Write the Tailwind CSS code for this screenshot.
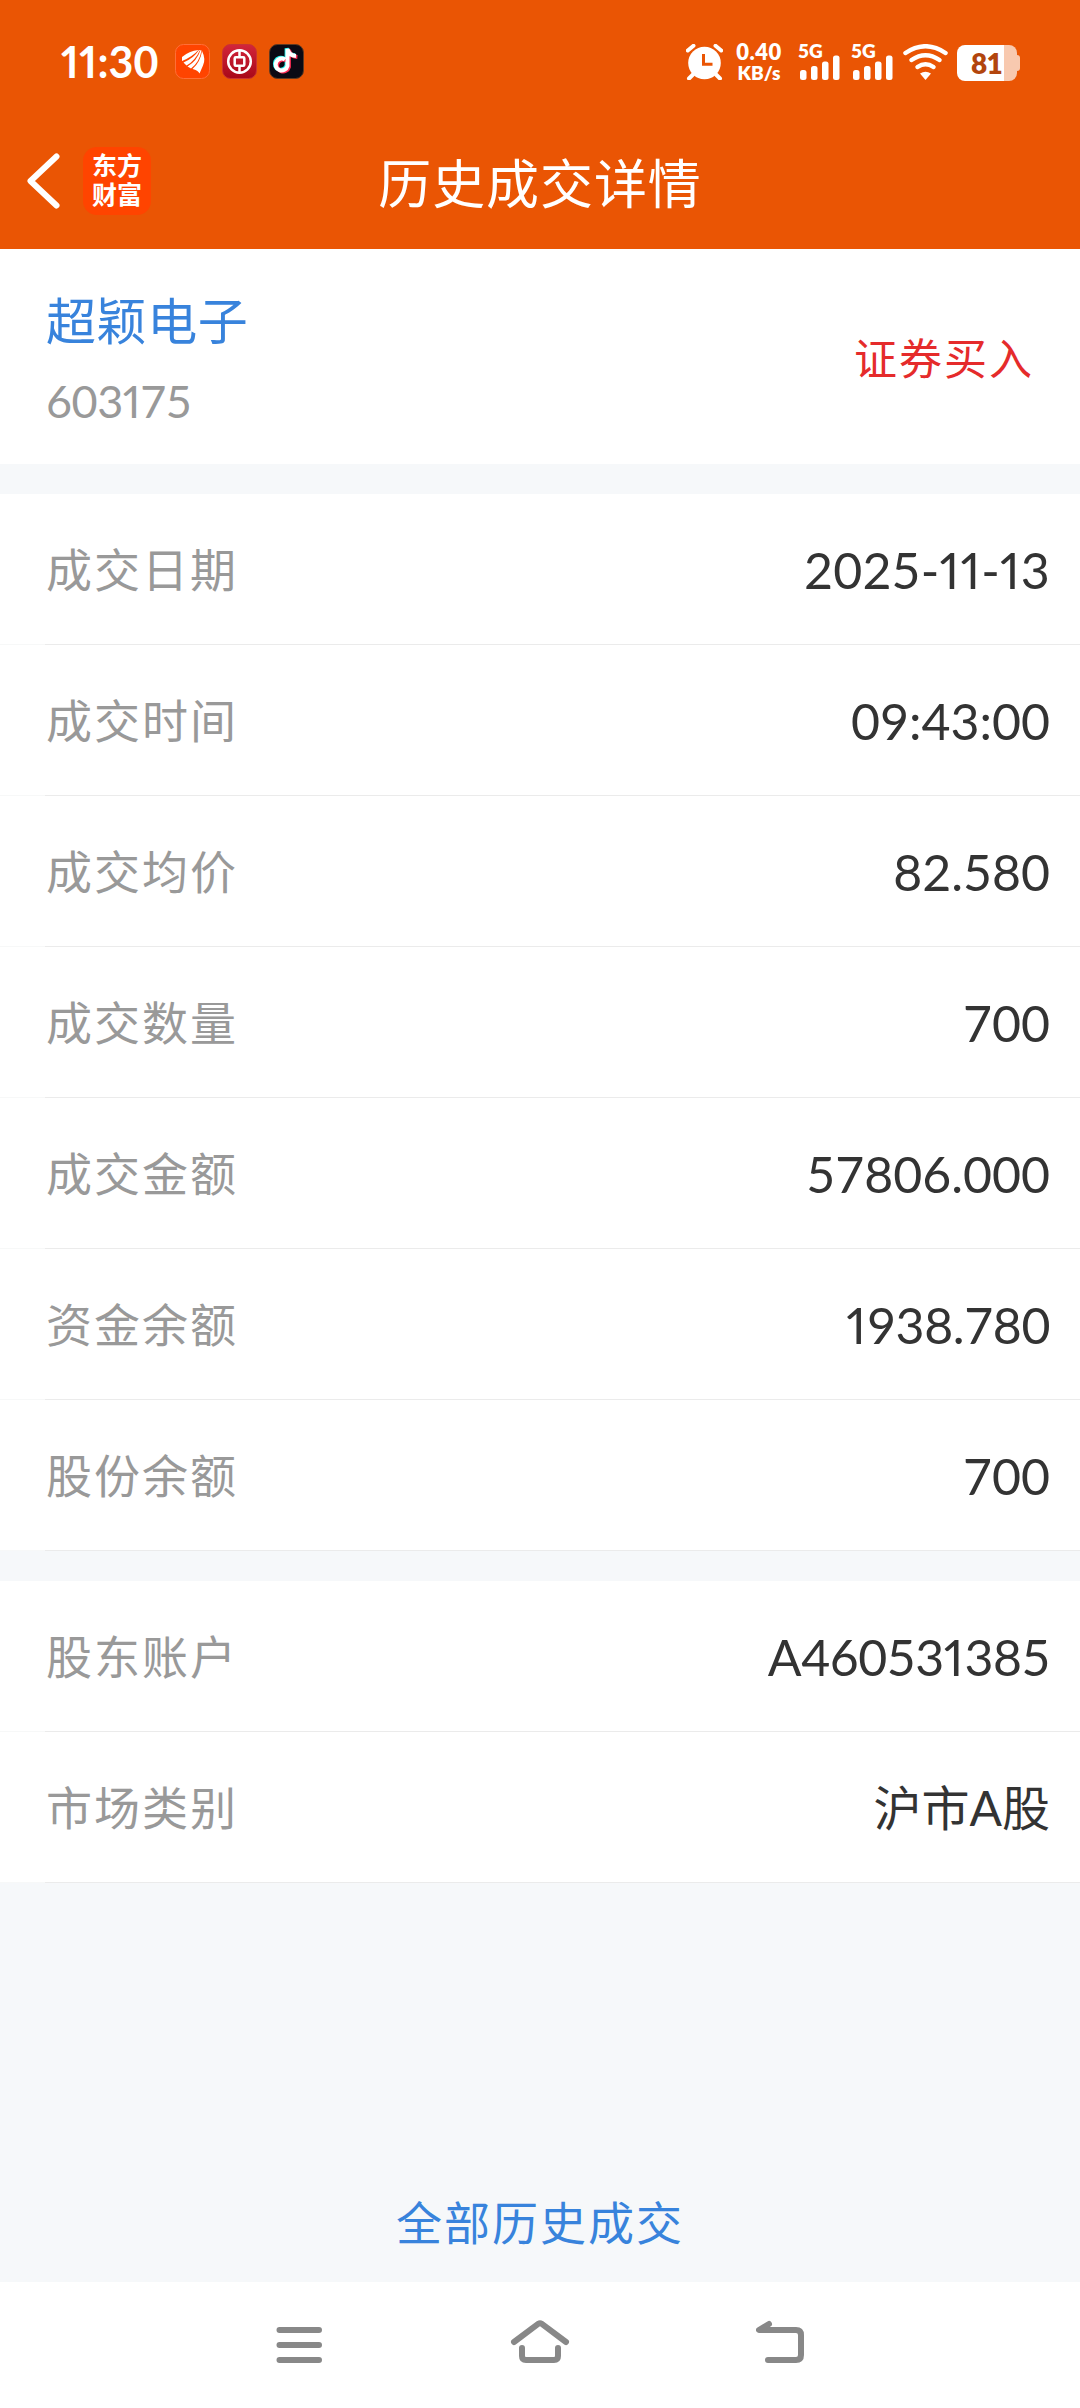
<!DOCTYPE html>
<html lang="zh-CN">
  <head>
    <meta charset="utf-8" />
    <title>历史成交详情</title>
    <script src="https://cdn.jsdelivr.net/npm/@tailwindcss/browser@4"></script>
  </head>
  <body>
    <div
      class="flex flex-col w-[1080px] h-[2408px] overflow-hidden bg-[#f6f8fa] font-['Lato','Noto_Sans_CJK_SC',sans-serif] text-[#333333]"
    >
      <header class="h-[249px] shrink-0 bg-[#ea5504] text-white">
        <!-- status bar -->
        <div class="flex items-start h-[124px] pt-11 pl-[61px] pr-[60px]">
          <span
            class="w-[114px] text-[43px] leading-[35px] font-bold tabular-nums whitespace-nowrap"
            ><span class="proportional-nums tracking-[0.5px]">11</span>:30</span
          >
          <div class="flex gap-3">
            <svg class="w-[35px] h-[35px]" viewBox="0 0 35 35">
              <rect x=".5" y=".5" width="34" height="34" rx="8" fill="#ff4400" stroke="#ff6f38" />
              <g fill="#fff">
                <path d="M7 13Q14 7 23.500 6Q17 13 7 17Z" />
                <path d="M8.500 18.500Q19 14 24 6L25 6Q20 17 11.500 21.500Z" />
                <path d="M12.500 22.500Q22 17 25.500 6L26.500 6.500Q24.500 18 16 24.500Z" />
                <path d="M17.500 25Q25.500 18 27 7Q31 15 28 21.500L24.500 29.500Q23 26 17.500 25Z" />
              </g>
            </svg>
            <svg class="w-[35px] h-[35px]" viewBox="0 0 35 35">
              <defs>
                <linearGradient id="boc" x1="0" y1="0" x2="0" y2="1">
                  <stop offset="0" stop-color="#d3253b" />
                  <stop offset="1" stop-color="#a80818" />
                </linearGradient>
              </defs>
              <rect x=".5" y=".5" width="34" height="34" rx="8" fill="url(#boc)" stroke="#c93232" />
              <g fill="none" stroke="#fff" stroke-width="2.500">
                <circle cx="17.500" cy="17.500" r="11.300" />
                <rect x="12.700" y="13.200" width="9.600" height="8.600" rx="1" />
                <path d="M17.500 6V13M17.500 22V29" />
              </g>
            </svg>
            <svg class="w-[35px] h-[35px]" viewBox="0 0 35 35">
              <rect x=".5" y=".5" width="34" height="34" rx="8" fill="#0b0a14" stroke="#5e3a22" />
              <g fill="none" stroke-width="4">
                <path d="M16 15.500A6 6 0 1 0 18.500 22V5Q20 11.500 27 12" stroke="#25f4ee" transform="translate(-.9 -.7)" />
                <path d="M16 15.500A6 6 0 1 0 18.500 22V5Q20 11.500 27 12" stroke="#fe2c55" transform="translate(1.400 1)" />
                <path d="M16 15.500A6 6 0 1 0 18.500 22V5Q20 11.500 27 12" stroke="#fff" />
              </g>
            </svg>
          </div>
          <div class="flex ml-auto">
            <svg class="w-[37px] h-9" viewBox="0 0 37 36">
              <circle cx="18.500" cy="19" r="16.300" fill="#fff" />
              <path
                d="M1.800 6.500L7.500 1.800M35.200 6.500L29.500 1.800M3 34.500L7 30.500M34 34.500L30 30.500"
                stroke="#fff"
                stroke-width="4"
                stroke-linecap="round"
              />
              <path d="M17.500 10V20.200H26.500" fill="none" stroke="#ea5504" stroke-width="3" />
            </svg>
            <div
              class="flex flex-col items-center w-[48px] ml-[12px] -mt-[3px] font-extrabold whitespace-nowrap"
            >
              <span class="text-[22px] leading-[22px] tracking-[0.5px]">0.40</span>
              <span class="text-[19px] leading-[19px]">KB/s</span>
            </div>
            <svg class="w-[43px] h-9 ml-[15px] overflow-visible" viewBox="0 0 43 36" fill="#fff">
              <text x="0" y="14" font-size="19" font-weight="800">5G</text>
              <rect x="2" y="26" width="6.500" height="10" rx="2.500" />
              <rect x="13" y="22" width="6.500" height="14" rx="2.500" />
              <rect x="24" y="17.500" width="6.500" height="18.500" rx="2.500" />
              <rect x="35" y="11.500" width="6.500" height="24.500" rx="2.500" />
            </svg>
            <svg class="w-[43px] h-9 ml-[10px] overflow-visible" viewBox="0 0 43 36" fill="#fff">
              <text x="0" y="14" font-size="19" font-weight="800">5G</text>
              <rect x="2" y="26" width="6.500" height="10" rx="2.500" />
              <rect x="13" y="22" width="6.500" height="14" rx="2.500" />
              <rect x="24" y="17.500" width="6.500" height="18.500" rx="2.500" />
              <rect x="35" y="11.500" width="6.500" height="24.500" rx="2.500" />
            </svg>
            <svg class="w-[45px] h-9 ml-[9px]" viewBox="0 0 45 36">
              <g fill="none" stroke="#fff" stroke-width="4.500" stroke-linecap="round">
                <path d="M2.500 9Q22.500 -4.500 42.500 9" />
                <path d="M8.500 16Q22.500 6.500 36.500 16" />
                <path d="M14.500 23Q22.500 17.500 30.500 23" />
              </g>
              <path d="M17 29.500Q22.500 26 28 29.500L22.500 36Z" fill="#fff" />
            </svg>
            <div class="flex items-center ml-[9px]">
              <div
                class="flex items-center justify-center w-[60px] h-9 rounded-lg bg-linear-to-r from-white from-[47px] to-[#f8c9af] to-[47px] text-[28px] leading-none font-extrabold tracking-tight text-[#b2450d]"
              >
                <span class="pr-px">81</span>
              </div>
              <div class="w-[3px] h-4 rounded-r-[3px] bg-[#f8c9af]"></div>
            </div>
          </div>
        </div>

        <!-- title bar -->
        <div class="grid grid-cols-[1fr_auto_1fr] items-start h-[125px] pt-[23px] pl-[26px]">
          <div class="flex">
            <svg class="w-[34px] h-[56px] mt-[6px]" viewBox="0 0 34 56">
              <path
                d="M30.500 3.500L4.500 28L30.500 52.500"
                fill="none"
                stroke="#fff"
                stroke-width="6"
                stroke-linecap="round"
                stroke-linejoin="round"
              />
            </svg>
            <div
              class="w-[68px] h-[68px] ml-[23px] pt-1 rounded-[14px] bg-[#ff4400] text-center text-[25px] leading-[29px] font-bold"
            >
              东方<br />财富
            </div>
          </div>
          <h1 class="pt-[7px] -translate-x-[13px] text-[53px] leading-[60px] tracking-[0.9px]">
            历史成交详情
          </h1>
        </div>
      </header>

      <section class="flex justify-between h-[215px] shrink-0 pl-[46px] pr-[46px] bg-white">
        <div class="pt-[41px]">
          <div class="text-[50px] leading-[62px] tracking-[0.6px] text-[#3883dc]">超颖电子</div>
          <div class="mt-[21px] text-[45px] leading-[56px] tabular-nums tracking-[-0.5px] text-[#999999]">
            603<span class="proportional-nums">1</span>75
          </div>
        </div>
        <div class="pt-[80px] text-[43px] leading-[60px] tracking-[2px] text-[#e52b2b]">证券买入</div>
      </section>

      <section id="trade-rows" class="mt-[30px] bg-white"></section>
      <section id="account-rows" class="mt-[30px] bg-white"></section>

      <div class="flex flex-grow items-end justify-center pb-[27px]">
        <a class="text-[46px] leading-[64px] tracking-[2px] text-[#3883dc]">全部历史成交</a>
      </div>

      <!-- system navigation -->
      <nav
        class="flex justify-between h-[126px] shrink-0 pt-[36px] pl-[275px] pr-[276px] bg-white text-[#888888]"
      >
        <svg class="w-12 h-12" viewBox="0 0 48 48">
          <path d="M4.500 12H44M4.500 27H44M4.500 42H44" stroke="currentColor" stroke-width="6" stroke-linecap="round" />
        </svg>
        <svg class="w-[60px] h-12" viewBox="0 0 60 48">
          <g fill="none" stroke="currentColor" stroke-width="6" stroke-linecap="round" stroke-linejoin="round">
            <path d="M4 24L28.500 5.700Q30 4.700 31.500 5.700L56 24" />
            <path d="M12 30V38Q12 42 16 42H44Q48 42 48 38V30" />
          </g>
        </svg>
        <svg class="w-12 h-12" viewBox="0 0 48 48">
          <path
            d="M13 6L3 12H40Q45 12 45 17V37Q45 42 40 42H12"
            fill="none"
            stroke="currentColor"
            stroke-width="6"
            stroke-linecap="round"
            stroke-linejoin="round"
          />
        </svg>
      </nav>
    </div>

    <script type="text/javascript">
      const tradeRows = [
        { label: "成交日期", value: "2025-11-13", style: "text-[50px] tracking-[0.2px]" },
        { label: "成交时间", value: "09:43:00" },
        { label: "成交均价", value: "82.580" },
        { label: "成交数量", value: "700" },
        { label: "成交金额", value: "57806.000" },
        { label: "资金余额", value: "1938.780", style: "text-[50px] tracking-[-0.4px]" },
        { label: "股份余额", value: "700" },
      ];
      const accountRows = [
        { label: "股东账户", value: "A460531385", style: "text-[50px] tracking-[-0.5px]" },
        { label: "市场类别", value: "沪市A股", style: "text-[48px]" },
      ];

      // digits are tabular, except for the narrow 1
      const narrowOnes = (value) =>
        value.replace(/1+/g, (ones) => `<span class="proportional-nums tracking-[1px]">${ones}</span>`);

      const makeRow = ({ label, value, style = "text-[50px]" }) => {
        return `
          <div class="flex flex-col h-[151px]">
            <div class="flex flex-grow items-center justify-between pl-[46px] pr-[30px] pt-0.5">
              <span class="text-[46px] leading-[60px] tracking-[2px] text-[#999999]">${label}</span>
              <span class="${style} leading-[60px] tabular-nums">${narrowOnes(value)}</span>
            </div>
            <div class="flex h-px bg-[#f7f8f8]">
              <div class="flex-grow ml-[45px] bg-[#ebebeb]"></div>
            </div>
          </div>
        `;
      };

      document.getElementById("trade-rows").innerHTML = tradeRows.map(makeRow).join("");
      document.getElementById("account-rows").innerHTML = accountRows.map(makeRow).join("");
    </script>
  </body>
</html>
